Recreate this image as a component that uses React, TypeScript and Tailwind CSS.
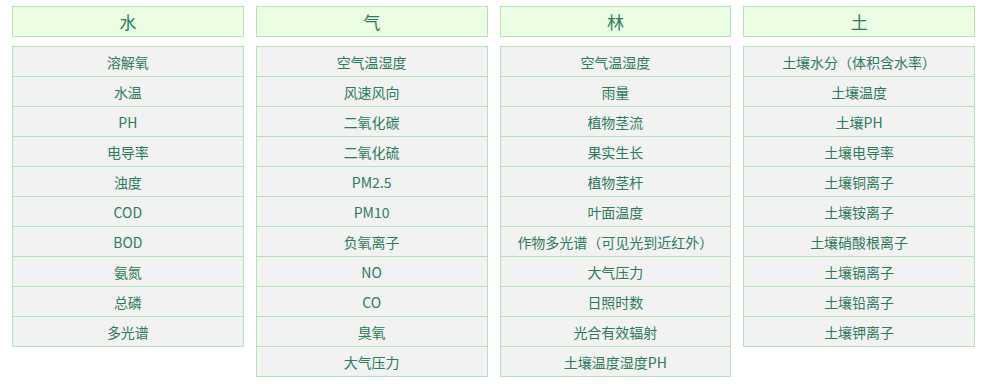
import React from 'react';

const columns: { title: string; items: string[] }[] = [
    {
        title: '水',
        items: ['溶解氧', '水温', 'PH', '电导率', '浊度', 'COD', 'BOD', '氨氮', '总磷', '多光谱'],
    },
    {
        title: '气',
        items: ['空气温湿度', '风速风向', '二氧化碳', '二氧化硫', 'PM2.5', 'PM10', '负氧离子', 'NO', 'CO', '臭氧', '大气压力'],
    },
    {
        title: '林',
        items: ['空气温湿度', '雨量', '植物茎流', '果实生长', '植物茎杆', '叶面温度', '作物多光谱（可见光到近红外）', '大气压力', '日照时数', '光合有效辐射', '土壤温度湿度PH'],
    },
    {
        title: '土',
        items: ['土壤水分（体积含水率）', '土壤温度', '土壤PH', '土壤电导率', '土壤铜离子', '土壤铵离子', '土壤硝酸根离子', '土壤镉离子', '土壤铅离子', '土壤钾离子'],
    },
];

const App: React.FC = () => {
    return (
        <div className="w-[987px] h-[384px] bg-white px-3 pt-[6px] font-['Microsoft_YaHei','Noto_Sans_CJK_SC',sans-serif] text-[#2e7b5c]">
            <div className="grid grid-cols-4 gap-3">
                {columns.map((col) => (
                    <div key={col.title} className="flex flex-col">
                        <div className="h-[31px] border border-[#b4e2b6] bg-[#ebfde2] flex items-center justify-center text-[17px] leading-none">
                            {col.title}
                        </div>
                        <div className="mt-[9px] border-t border-l border-r border-[#b4e2b6]">
                            {col.items.map((item, i) => (
                                <div key={i} className="h-[30px] border-b border-[#b4e2b6] bg-[#f2f2f2] flex items-center justify-center text-[14px] leading-none">
                                    {item}
                                </div>
                            ))}
                        </div>
                    </div>
                ))}
            </div>
        </div>
    );
};

export default App;
